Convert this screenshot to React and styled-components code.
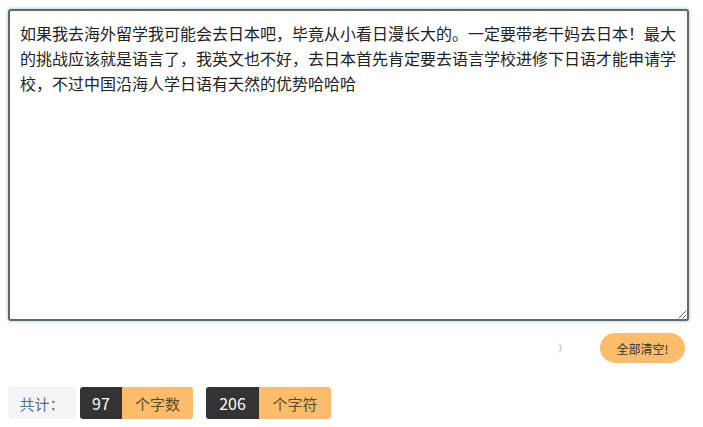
import React, { useState } from 'react';
import styled, { createGlobalStyle } from 'styled-components';

const Global = createGlobalStyle`
  body {
    margin: 0;
    background: #fff;
    font-family: "Microsoft YaHei", "Noto Sans CJK SC", "Liberation Sans", sans-serif;
  }
`;

const Page = styled.div`
  padding: 9px 14px 0 8px;
  width: 681px;
`;

const TextBox = styled.textarea`
  display: block;
  box-sizing: border-box;
  width: 681px;
  height: 312px;
  padding: 10px 8px 10px 10px;
  border: 2px solid #5b6a6f;
  border-radius: 3px;
  box-shadow: 0 0 3px 1px #c9d6da;
  font-family: "Noto Sans CJK SC", sans-serif;
  font-size: 16px;
  line-height: 25px;
  color: #222;
  outline: none;
  resize: vertical;
`;

const Actions = styled.div`
  display: flex;
  justify-content: flex-end;
  align-items: center;
  gap: 38px;
  margin-top: 12px;
  padding-right: 4px;
`;

const Spinner = styled.span`
  width: 14px;
  height: 14px;
  border-radius: 50%;
  border: 2px solid transparent;
  border-right-color: #d8d8d8;
  box-sizing: border-box;
`;

const ClearButton = styled.button`
  width: 85px;
  height: 30px;
  border: none;
  border-radius: 15px;
  background: #fbbd6b;
  color: #333;
  font-family: "Noto Sans CJK SC", sans-serif;
  font-size: 12px;
  cursor: pointer;
`;

const Stats = styled.div`
  display: flex;
  align-items: center;
  gap: 13px;
  margin-top: 24px;
`;

const Label = styled.span`
  display: flex;
  align-items: center;
  justify-content: center;
  width: 68px;
  height: 32px;
  margin-right: -9px;
  background: #f4f4f5;
  border-radius: 3px;
  color: #5a6d8a;
  font-family: "Noto Sans CJK SC", sans-serif;
  font-size: 15px;
`;

const Badge = styled.span`
  display: flex;
  height: 32px;
  border-radius: 3px;
  overflow: hidden;
  font-family: "Noto Sans CJK SC", sans-serif;
`;

const Count = styled.span`
  display: flex;
  align-items: center;
  justify-content: center;
  width: ${(p) => p.$w}px;
  background: #333;
  color: #fff;
  font-size: 16px;
`;

const Unit = styled.span`
  display: flex;
  align-items: center;
  justify-content: center;
  width: ${(p) => p.$w}px;
  background: #fbbd6b;
  color: #5b4a2e;
  font-size: 15px;
`;

const initial =
  '如果我去海外留学我可能会去日本吧，毕竟从小看日漫长大的。一定要带老干妈去日本！最大的挑战应该就是语言了，我英文也不好，去日本首先肯定要去语言学校进修下日语才能申请学校，不过中国沿海人学日语有天然的优势哈哈哈';

const App = () => {
  const [text, setText] = useState(initial);
  const words = text.replace(/[，。！？、；：,.!?;:\s]/g, '').length;
  const chars = text.length * 2;

  return (
    <Page>
      <Global />
      <TextBox value={text} onChange={(e) => setText(e.target.value)} />
      <Actions>
        <Spinner />
        <ClearButton onClick={() => setText('')}>全部清空!</ClearButton>
      </Actions>
      <Stats>
        <Label>共计：</Label>
        <Badge>
          <Count $w={42}>{words}</Count>
          <Unit $w={71}>个字数</Unit>
        </Badge>
        <Badge>
          <Count $w={53}>{chars}</Count>
          <Unit $w={72}>个字符</Unit>
        </Badge>
      </Stats>
    </Page>
  );
};

export default App;
